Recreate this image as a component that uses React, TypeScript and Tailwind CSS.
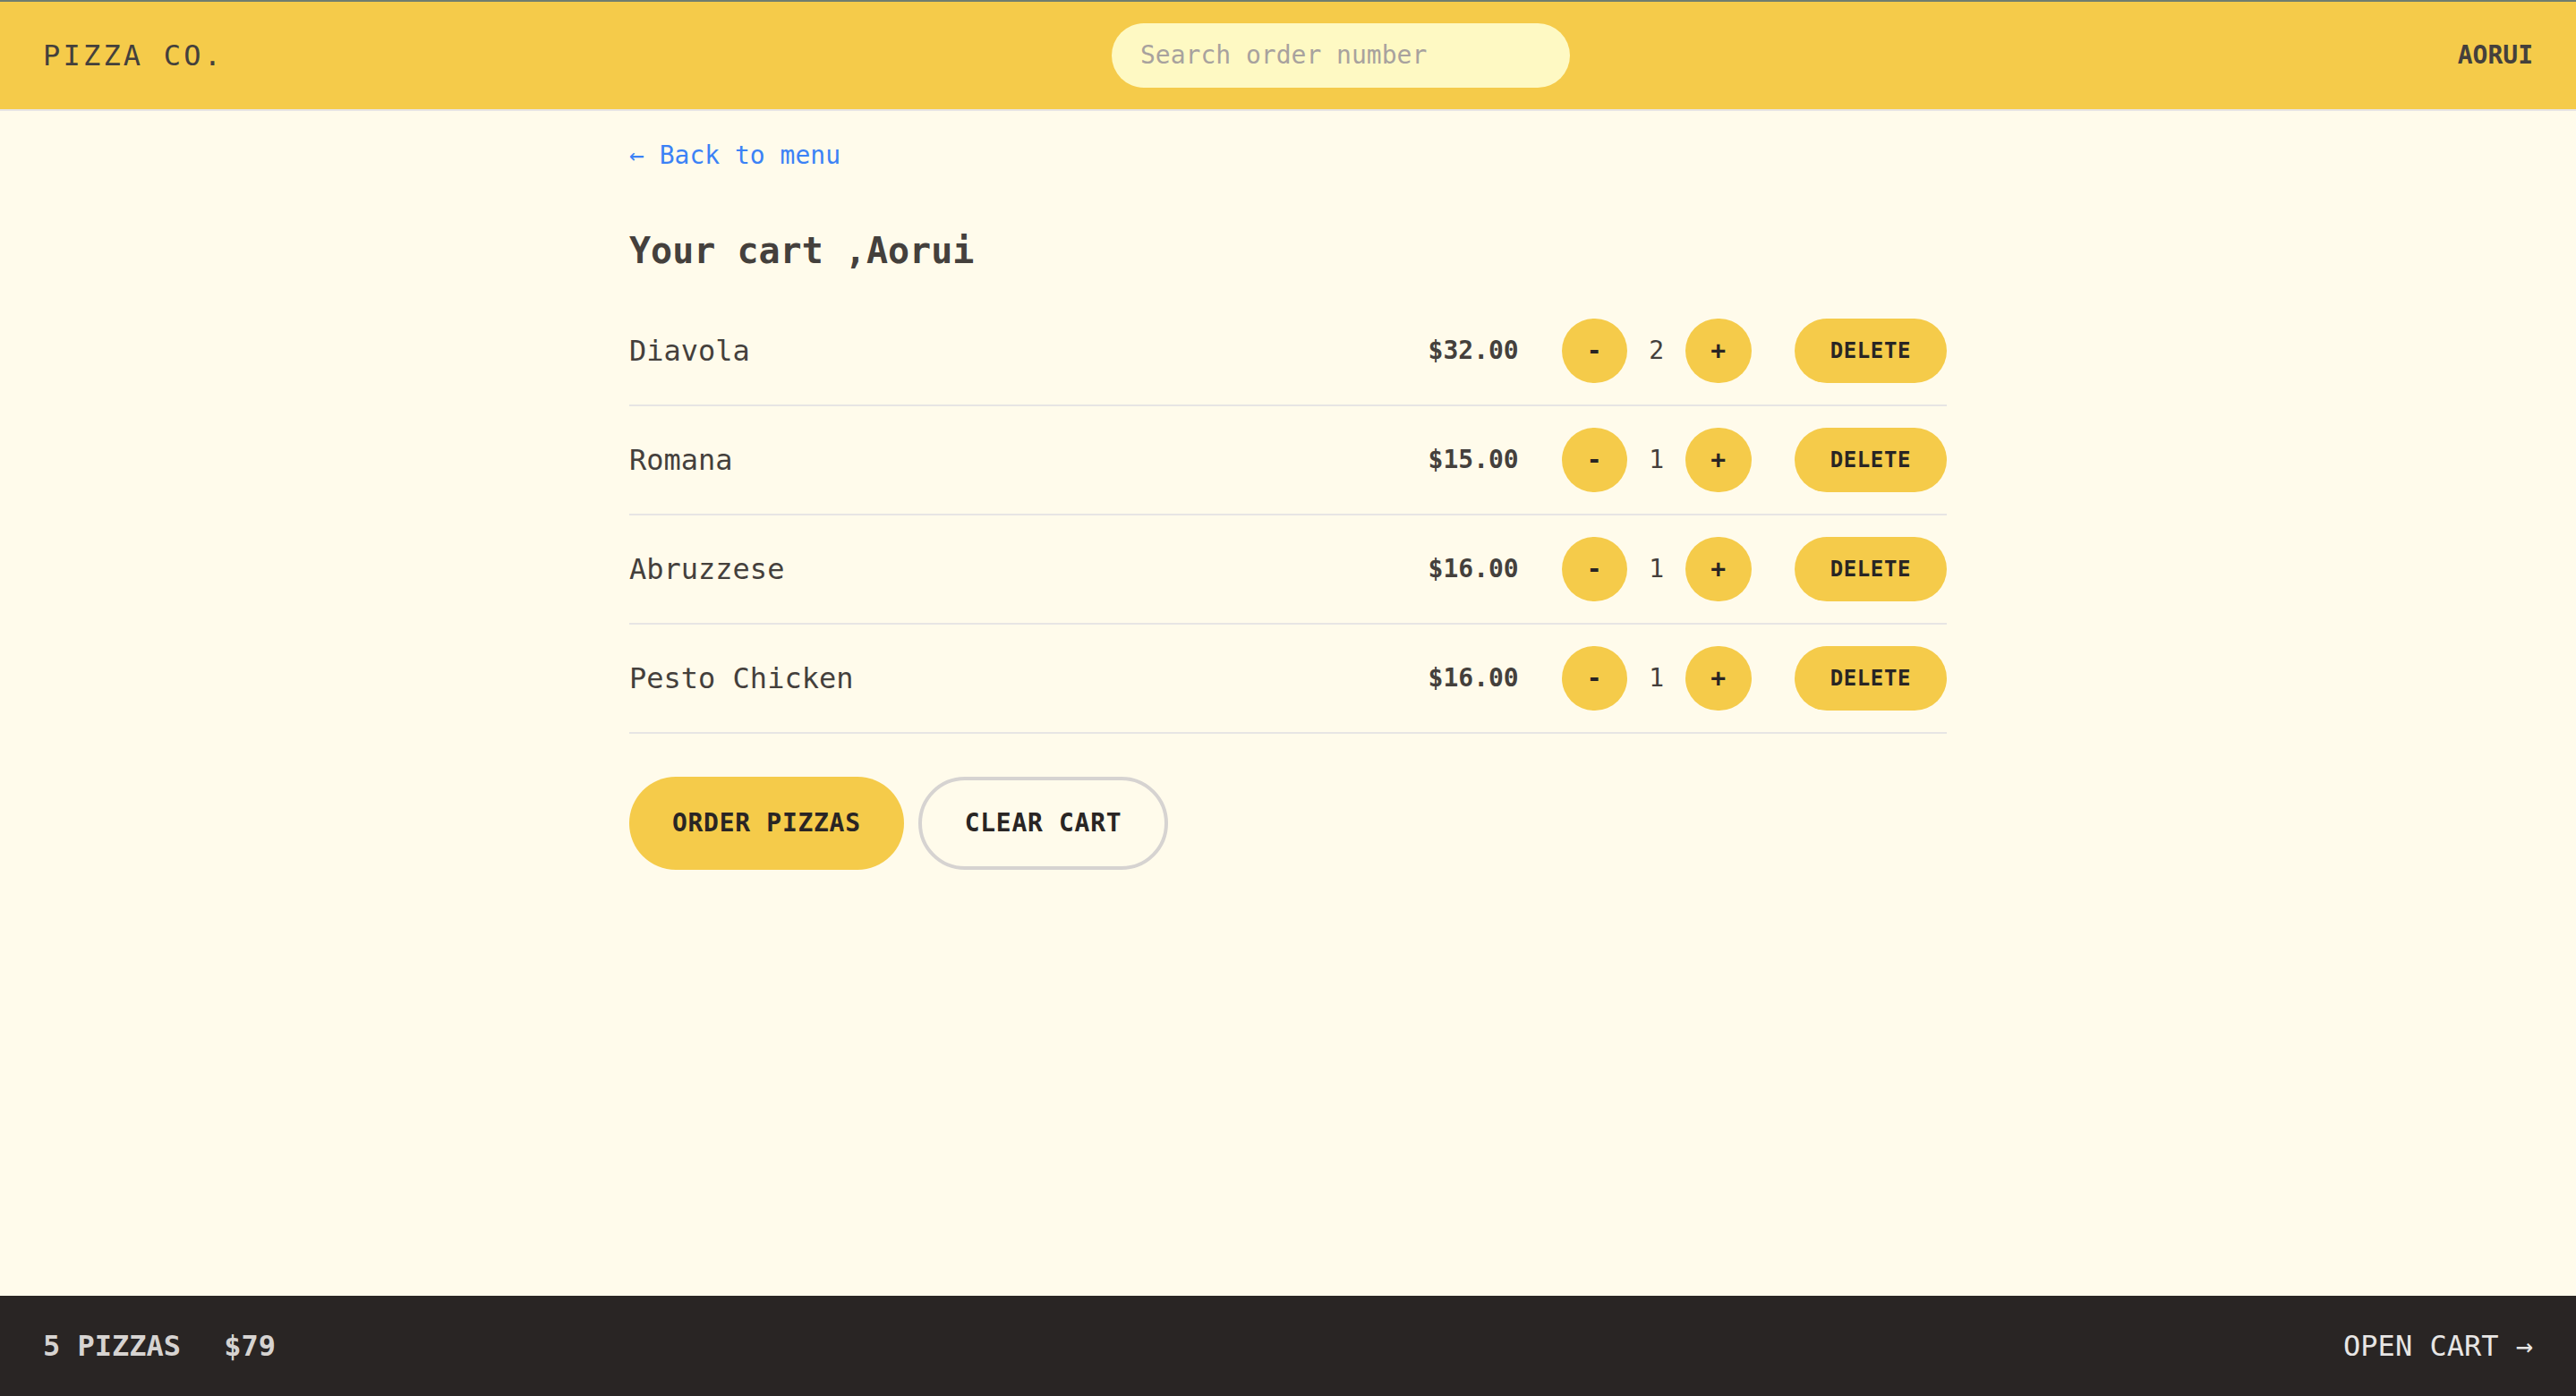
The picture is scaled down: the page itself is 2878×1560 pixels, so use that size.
import React from "react";

type Item = { name: string; price: string; qty: number };

const items: Item[] = [
  { name: "Diavola", price: "$32.00", qty: 2 },
  { name: "Romana", price: "$15.00", qty: 1 },
  { name: "Abruzzese", price: "$16.00", qty: 1 },
  { name: "Pesto Chicken", price: "$16.00", qty: 1 },
];

function RoundButton({ children }: { children: React.ReactNode }) {
  return (
    <button className="rounded-full bg-[#f5cb4a] px-[28px] py-[16px] text-[28px] leading-[40px] font-semibold uppercase tracking-[0.025em] text-[#292524]">
      {children}
    </button>
  );
}

export default function App() {
  return (
    <div className="grid h-screen grid-rows-[auto_1fr_auto] border-t-2 border-[#6f7d6f] bg-[#fffbeb] font-['DejaVu_Sans_Mono',monospace] text-[32px] leading-[48px] text-[#44403c]">
      <header className="flex items-center justify-between border-b-2 border-[#e7e5e4] bg-[#f5cb4a] px-[48px] py-[24px] uppercase">
        <a className="tracking-[0.1em]">Pizza Co.</a>
        <input
          className="w-[512px] rounded-full bg-[#fef9c3] px-[32px] py-[16px] text-[28px] leading-[40px] text-[#44403c] outline-none placeholder:text-[#a8a29e]"
          placeholder="Search order number"
        />
        <div className="text-[28px] leading-[40px] font-semibold">Aorui</div>
      </header>

      <main className="overflow-auto">
        <div className="mx-auto max-w-[1536px] px-[32px] py-[24px]">
          <div>
            <a className="text-[28px] leading-[40px] text-[#3b82f6]">&larr; Back to menu</a>
          </div>
          <h2 className="mt-[56px] text-[40px] leading-[56px] font-semibold">Your cart ,Aorui</h2>
          <ul className="mt-[24px] divide-y-2 divide-[#e7e5e4] border-b-2 border-[#e7e5e4]">
            {items.map((it) => (
              <li key={it.name} className="flex items-center justify-between py-[24px]">
                <p>{it.name}</p>
                <div className="flex items-center gap-[48px]">
                  <p className="text-[28px] leading-[40px] font-bold">{it.price}</p>
                  <div className="flex items-center gap-[24px]">
                    <RoundButton>-</RoundButton>
                    <span className="text-[28px] leading-[40px] font-medium">{it.qty}</span>
                    <RoundButton>+</RoundButton>
                  </div>
                  <button className="rounded-full bg-[#f5cb4a] px-[40px] py-[20px] text-[24px] leading-[32px] font-semibold uppercase tracking-[0.025em] text-[#292524]">
                    Delete
                  </button>
                </div>
              </li>
            ))}
          </ul>
          <div className="mt-[48px] flex gap-[16px]">
            <button className="rounded-full bg-[#f5cb4a] px-[48px] py-[32px] text-[28px] leading-[40px] font-semibold uppercase tracking-[0.025em] text-[#292524]">
              Order pizzas
            </button>
            <button className="rounded-full border-[4px] border-[#d6d3d1] px-[48px] py-[28px] text-[28px] leading-[40px] font-semibold uppercase tracking-[0.025em] text-[#292524]">
              Clear cart
            </button>
          </div>
        </div>
      </main>

      <footer className="flex items-center justify-between bg-[#292524] px-[48px] py-[32px] text-[32px] leading-[48px] uppercase text-[#e7e5e4]">
        <p className="flex gap-[48px] font-semibold text-[#d6d3d1]">
          <span>5 pizzas</span>
          <span>$79</span>
        </p>
        <a>Open cart &rarr;</a>
      </footer>
    </div>
  );
}
